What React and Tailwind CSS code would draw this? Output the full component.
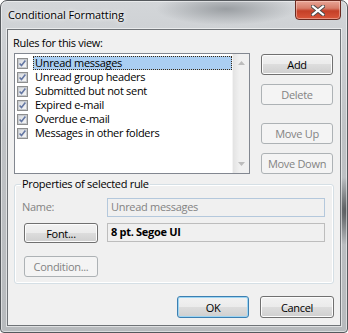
import React from 'react';

const rules = [
  'Unread messages',
  'Unread group headers',
  'Submitted but not sent',
  'Expired e-mail',
  'Overdue e-mail',
  'Messages in other folders',
];

const btn =
  'flex items-center justify-center rounded-[3px] border text-[11px] leading-none';
const btnNormal =
  'border-[#707070] bg-[linear-gradient(#f2f2f2_0%,#ebebeb_50%,#dddddd_50%,#cfcfcf_100%)] shadow-[inset_0_0_0_1px_#fcfcfc] text-black';
const btnDisabled = 'border-[#adb2b5] bg-[#f4f4f4] text-[#838383]';

function CheckBox() {
  return (
    <svg width="11" height="11" viewBox="0 0 11 11" className="shrink-0">
      <defs>
        <linearGradient id="cbfill" x1="0" y1="0" x2="1" y2="1">
          <stop offset="0" stopColor="#d6d9dd" />
          <stop offset="1" stopColor="#f8f8f8" />
        </linearGradient>
      </defs>
      <rect x="0.5" y="0.5" width="10" height="10" fill="#f4f4f4" stroke="#8e8f8f" />
      <rect x="1.5" y="1.5" width="8" height="8" fill="url(#cbfill)" stroke="#c8cbcf" />
      <path d="M2.6 5.4 L4.5 7.6 L8.4 2.6" fill="none" stroke="#6477a3" strokeWidth="1.6" />
    </svg>
  );
}

function CloseButton() {
  return (
    <div className="-mt-[1px] mr-[6px] flex h-[20px] w-[46px] items-center justify-center rounded-b-[4px] border border-[#6b2a20] bg-[linear-gradient(#e8a596_0%,#d77d6a_40%,#c43f27_55%,#d9563a_100%)] shadow-[inset_0_0_0_1px_rgba(255,220,210,0.45)]">
      <svg width="14" height="11" viewBox="0 0 14 11">
        <path d="M2 1.5 L12 9.5 M12 1.5 L2 9.5" stroke="#4a4a4a" strokeWidth="4" strokeLinecap="square" />
        <path d="M2 1.5 L12 9.5 M12 1.5 L2 9.5" stroke="#ffffff" strokeWidth="2.2" strokeLinecap="square" />
      </svg>
    </div>
  );
}

function ScrollBar() {
  return (
    <div className="flex w-[17px] flex-col items-center justify-between border-l border-[#f4f4f4] bg-[linear-gradient(90deg,#e3e3e3,#f0f0f0_40%,#f0f0f0)] py-[7px]">
      <svg width="7" height="4" viewBox="0 0 7 4">
        <path d="M0 4 L3.5 0 L7 4 Z" fill="#bcbcbc" />
      </svg>
      <svg width="7" height="4" viewBox="0 0 7 4">
        <path d="M0 0 L7 0 L3.5 4 Z" fill="#bcbcbc" />
      </svg>
    </div>
  );
}

export default function App() {
  return (
    <div className="h-[333px] w-[348px] bg-white font-['Open_Sans',sans-serif] text-[11px] tracking-[-0.3px] text-black">
      <div className="flex h-full w-full flex-col rounded-t-[7px] rounded-b-[4px] border border-[#55595d] bg-[radial-gradient(circle_at_347px_210px,#55585b_0,rgba(85,88,91,0)_34px),radial-gradient(ellipse_70px_16px_at_225px_8px,#9a9ea2_0,rgba(154,158,162,0)_100%),linear-gradient(#d3d6d9,#bfc2c5_40%,#b7babd)] shadow-[inset_0_0_0_1px_rgba(255,255,255,0.5)]">
        {/* title bar */}
        <div className="flex h-[28px] items-start justify-between">
          <span className="ml-[7px] mt-[6px] leading-[15px] tracking-[-0.1px] text-black [text-shadow:0_0_6px_#fff,0_0_3px_#fff]">
            Conditional Formatting
          </span>
          <CloseButton />
        </div>

        {/* client area */}
        <div className="mx-[6px] mb-[6px] flex flex-1 flex-col border border-[#6f7377] bg-[#f0f0f0] shadow-[0_0_0_1px_rgba(255,255,255,0.55)]">
          <div className="ml-[5px] mt-[5px] leading-[15px]">Rules for this view:</div>

          <div className="mt-[3px] flex">
            {/* list box */}
            <div className="ml-[6px] flex h-[121px] w-[236px] border border-[#828790] bg-white">
              <div className="flex flex-1 flex-col pl-[2px] pt-[2px]">
                {rules.map((r, i) => (
                  <div key={r} className="flex h-[14px] items-center">
                    <CheckBox />
                    <div
                      className={
                        i === 0
                          ? 'ml-[5px] flex h-[14px] flex-1 items-center border border-dotted border-[#3b2a14] bg-[#aacef2] pl-[1px] leading-[12px]'
                          : 'ml-[5px] flex h-[14px] flex-1 items-center pl-[2px] leading-[12px]'
                      }
                    >
                      {r}
                    </div>
                  </div>
                ))}
              </div>
              <ScrollBar />
            </div>

            {/* side buttons */}
            <div className="ml-[11px] flex flex-col">
              <div className={`${btn} ${btnNormal} mt-[1px] h-[21px] w-[72px]`}>Add</div>
              <div className={`${btn} ${btnDisabled} mt-[9px] h-[21px] w-[72px]`}>Delete</div>
              <div className={`${btn} ${btnDisabled} mt-[18px] h-[21px] w-[72px]`}>Move Up</div>
              <div className={`${btn} ${btnDisabled} mt-[9px] h-[21px] w-[72px]`}>Move Down</div>
            </div>
          </div>

          {/* group box */}
          <div className="relative ml-[6px] mt-[10px] h-[100px] w-[320px] rounded-[3px] border border-[#d5dfe5] shadow-[inset_0_0_0_1px_#fff]">
            <span className="absolute -top-[9px] left-[6px] bg-[#f0f0f0] px-[1px] leading-[15px]">
              Properties of selected rule
            </span>
            <div className="flex flex-col pl-[7px] pt-[13px]">
              <div className="flex h-[19px] items-center">
                <span className="w-[85px] text-[#838383]">Name:</span>
                <div className="flex h-[19px] w-[218px] items-center border border-[#b4c8dc] bg-[#f0f0f0] pl-[3px] text-[#838383]">
                  Unread messages
                </div>
              </div>
              <div className="mt-[6px] flex items-start">
                <div className={`${btn} ${btnNormal} ml-[2px] h-[20px] w-[74px]`}>Font...</div>
                <div className="ml-[9px] flex h-[19px] w-[218px] items-center border border-[#bdbdbd] bg-[#f0f0f0] pl-[3px] font-bold">
                  8 pt. Segoe UI
                </div>
              </div>
              <div className={`${btn} ${btnDisabled} ml-[2px] mt-[13px] h-[21px] w-[74px]`}>Condition...</div>
            </div>
          </div>

          {/* footer */}
          <div className="mt-[12px] flex">
            <div className={`${btn} ml-[169px] h-[22px] w-[72px] border-[#3c7fb1] bg-[linear-gradient(#f2f2f2_0%,#ebebeb_50%,#dddddd_50%,#cfcfcf_100%)] shadow-[inset_0_0_0_1px_#9dd5f3]`}>
              OK
            </div>
            <div className={`${btn} ${btnNormal} ml-[11px] h-[22px] w-[74px]`}>Cancel</div>
          </div>
        </div>
      </div>
    </div>
  );
}
